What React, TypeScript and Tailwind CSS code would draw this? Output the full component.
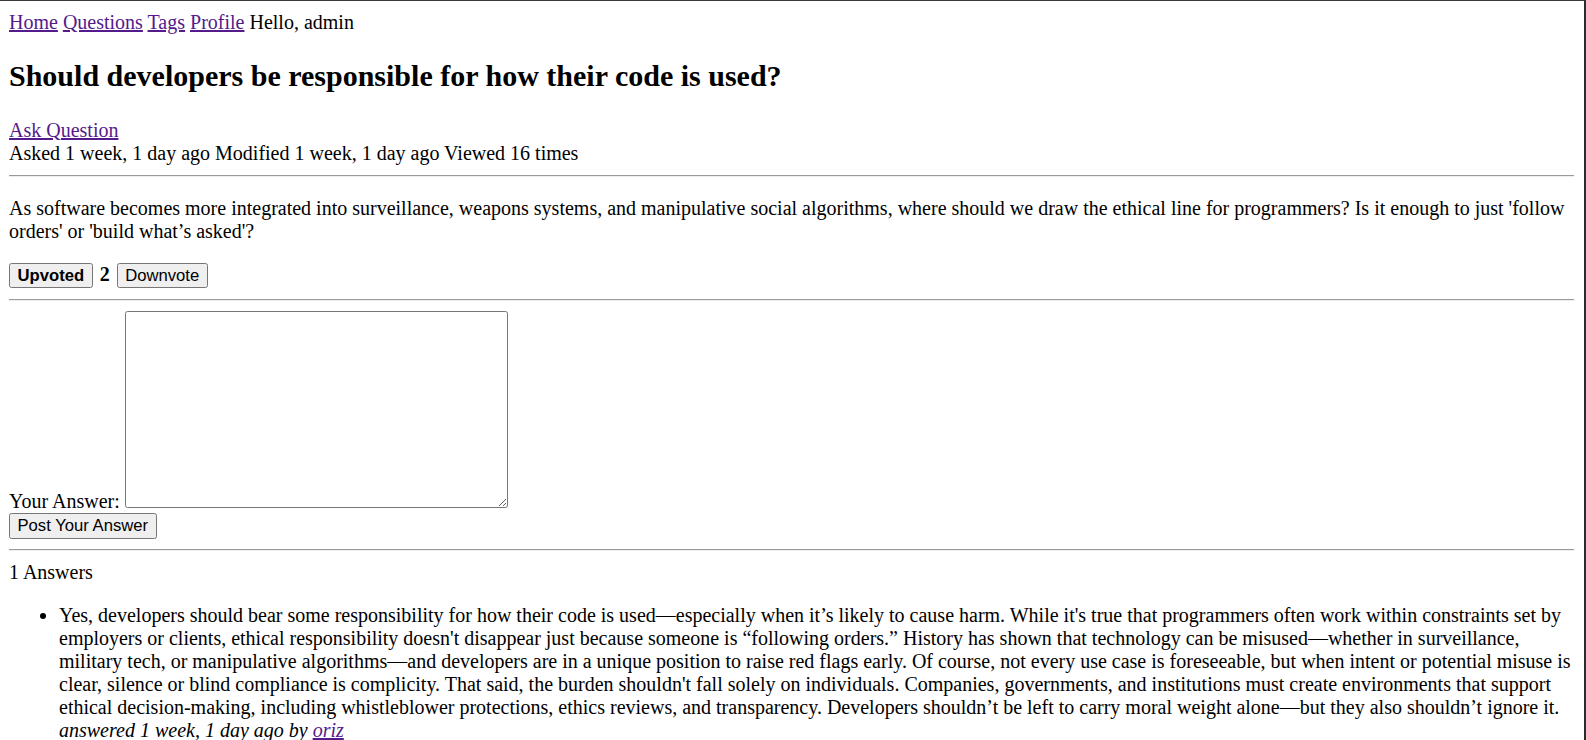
import React from 'react';

export default function App() {
  return (
    <div className="min-h-screen bg-white border-t border-t-[#3a3b37] border-r-2 border-r-[#2b2b2b] font-['Liberation_Serif',serif] text-[20px] leading-[23px] text-black overflow-hidden">
      <div className="pl-[9px] pr-[10px] py-[10px]">
        {/* Nav */}
        <nav>
          <a href="#" className="text-[#551a8b] underline">Home</a>{' '}
          <a href="#" className="text-[#551a8b] underline">Questions</a>{' '}
          <a href="#" className="text-[#551a8b] underline">Tags</a>{' '}
          <a href="#" className="text-[#551a8b] underline">Profile</a>{' '}
          <span>Hello, admin</span>
        </nav>

        {/* Question header */}
        <h1 className="my-[25px] text-[30px] leading-[34.5px] font-bold">
          Should developers be responsible for how their code is used?
        </h1>
        <div>
          <a href="#" className="text-[#551a8b] underline">Ask Question</a>
        </div>
        <div>Asked 1 week, 1 day ago Modified 1 week, 1 day ago Viewed 16 times</div>

        <hr className="mt-[10px] mb-[20px] border-t border-t-[#9a9a9a] border-b border-b-[#eeeeee]" />

        <p className="mb-[20px]">
          As software becomes more integrated into surveillance, weapons systems, and manipulative social
          algorithms, where should we draw the ethical line for programmers? Is it enough to just 'follow
          orders' or 'build what’s asked'?
        </p>

        {/* Votes */}
        <div className="flex items-baseline gap-[7px] h-[26px]">
          <button className="h-[25px] px-[7.5px] border border-[#767676] rounded-[2.5px] bg-[#efefef] font-['Liberation_Sans',sans-serif] text-[16.67px] font-bold leading-[19px]">
            Upvoted
          </button>
          <strong>2</strong>
          <button className="h-[25px] px-[7.5px] border border-[#767676] rounded-[2.5px] bg-[#efefef] font-['Liberation_Sans',sans-serif] text-[16.67px] leading-[19px]">
            Downvote
          </button>
        </div>

        <hr className="my-[10px] border-t border-t-[#9a9a9a] border-b border-b-[#eeeeee]" />

        {/* Answer form */}
        <form>
          <div className="flex items-end gap-[5px]">
            <label>Your Answer:</label>
            <textarea className="w-[383px] h-[197px] mb-[5px] border border-[#767676] rounded-[2.5px] bg-white" />
          </div>
          <button
            type="button"
            className="h-[26px] px-[7.5px] border border-[#767676] rounded-[2.5px] bg-[#efefef] font-['Liberation_Sans',sans-serif] text-[16.67px] leading-[19px]"
          >
            Post Your Answer
          </button>
        </form>

        <hr className="my-[10px] border-t border-t-[#9a9a9a] border-b border-b-[#eeeeee]" />

        {/* Answers */}
        <div>1 Answers</div>
        <ul className="mt-[20px] pl-[50px] list-disc">
          <li>
            Yes, developers should bear some responsibility for how their code is used—especially when it’s
            likely to cause harm. While it's true that programmers often work within constraints set by
            employers or clients, ethical responsibility doesn't disappear just because someone is “following
            orders.” History has shown that technology can be misused—whether in surveillance, military tech, or
            manipulative algorithms—and developers are in a unique position to raise red flags early. Of course,
            not every use case is foreseeable, but when intent or potential misuse is clear, silence or blind
            compliance is complicity. That said, the burden shouldn't fall solely on individuals. Companies,
            governments, and institutions must create environments that support ethical decision-making,
            including whistleblower protections, ethics reviews, and transparency. Developers shouldn’t be left
            to carry moral weight alone—but they also shouldn’t ignore it.
            <br />
            <em>
              answered 1 week, 1 day ago by{' '}
              <a href="#" className="text-[#551a8b] underline">oriz</a>
            </em>
          </li>
        </ul>
      </div>
    </div>
  );
}
